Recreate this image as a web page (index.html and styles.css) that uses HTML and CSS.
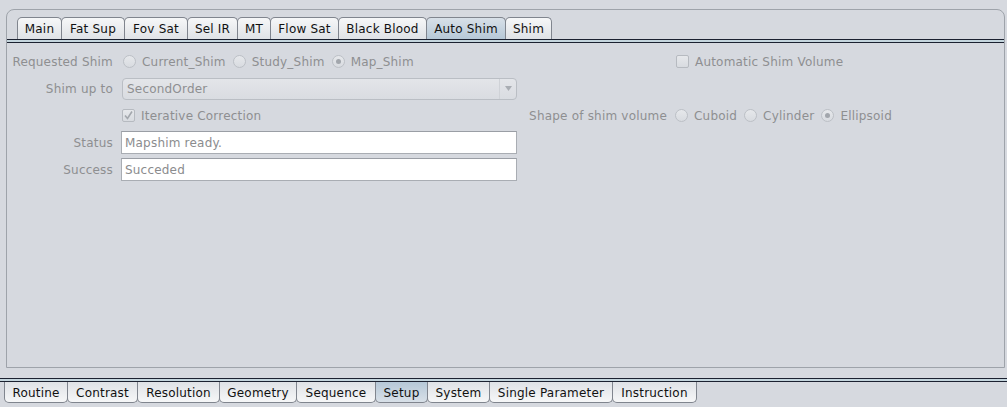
FILE: index.html
```html
<!DOCTYPE html>
<html>
<head>
<meta charset="utf-8">
<link rel="stylesheet" href="styles.css">
</head>
<body>
<div class="panel">
  <div class="tabs top-tabs">
    <div class="tab w-main">Main</div>
    <div class="tab w-fatsup">Fat Sup</div>
    <div class="tab w-fovsat">Fov Sat</div>
    <div class="tab w-selir">Sel IR</div>
    <div class="tab w-mt">MT</div>
    <div class="tab w-flowsat">Flow Sat</div>
    <div class="tab w-black">Black Blood</div>
    <div class="tab w-auto selected">Auto Shim</div>
    <div class="tab w-shim">Shim</div>
  </div>
  <div class="sep"></div>
  <div class="form">
    <div class="label">Requested Shim</div>
    <div class="group radios">
      <span class="radio"></span><span class="opt">Current_Shim</span>
      <span class="radio"></span><span class="opt">Study_Shim</span>
      <span class="radio on"></span><span class="opt">Map_Shim</span>
    </div>
    <div></div>
    <div class="group check-right">
      <span class="check"></span><span class="opt">Automatic Shim Volume</span>
    </div>

    <div class="label">Shim up to</div>
    <div class="combo">
      <span class="combo-text">SecondOrder</span>
      <span class="combo-btn"><svg width="7" height="5" viewBox="0 0 7 5"><path d="M0 0 H7 L3.5 5 Z" fill="#a9adb3"/></svg></span>
    </div>
    <div></div>
    <div></div>

    <div></div>
    <div class="group check-left">
      <span class="check"><svg width="11" height="11" viewBox="0 0 11 11"><path d="M2 5.5 L4.5 8.5 L9 1.5" fill="none" stroke="#a3a7ad" stroke-width="1.6"/></svg></span><span class="opt">Iterative Correction</span>
    </div>
    <div class="label">Shape of shim volume</div>
    <div class="group radios-right">
      <span class="radio"></span><span class="opt">Cuboid</span>
      <span class="radio"></span><span class="opt">Cylinder</span>
      <span class="radio on"></span><span class="opt">Ellipsoid</span>
    </div>

    <div class="label">Status</div>
    <div class="field">Mapshim ready.</div>
    <div></div>
    <div></div>

    <div class="label">Success</div>
    <div class="field">Succeded</div>
    <div></div>
    <div></div>
  </div>
</div>
<div class="sep full"></div>
<div class="tabs bottom-tabs">
  <div class="tab b-routine">Routine</div>
  <div class="tab b-contrast">Contrast</div>
  <div class="tab b-resolution">Resolution</div>
  <div class="tab b-geometry">Geometry</div>
  <div class="tab b-sequence">Sequence</div>
  <div class="tab b-setup selected">Setup</div>
  <div class="tab b-system">System</div>
  <div class="tab b-single">Single Parameter</div>
  <div class="tab b-instruction">Instruction</div>
</div>
</body>
</html>
```
FILE: styles.css
```css
html, body {
  margin: 0;
  padding: 0;
}
body {
  width: 1007px;
  height: 407px;
  overflow: hidden;
  background: #d6d9df;
  font-family: "DejaVu Sans", sans-serif;
  font-size: 12px;
  letter-spacing: 0.2px;
  color: #000;
}
.panel {
  box-sizing: border-box;
  margin: 9px 0 10px 6px;
  width: 999px;
  height: 359px;
  border: 1px solid #9ea3aa;
  border-radius: 8px 8px 0 0;
}
.tabs {
  display: flex;
}
.top-tabs {
  padding: 7px 0 0 10px;
  height: 22px;
}
.tab {
  box-sizing: border-box;
  border: 1px solid #80858e;
  margin-right: -1px;
  display: flex;
  align-items: center;
  justify-content: center;
  white-space: nowrap;
  color: #111;
  flex: none;
}
.top-tabs .tab {
  height: 22px;
  border-bottom: none;
  border-radius: 5px 5px 0 0;
  padding-top: 1px;
  background: linear-gradient(#f6f7f8, #dfe2e6);
}
.top-tabs .tab.selected {
  background: linear-gradient(#d8e0e8, #b6c8d7);
}
.w-main { width: 45px; }
.w-fatsup { width: 64px; }
.w-fovsat { width: 64px; }
.w-selir { width: 51px; }
.w-mt { width: 34px; }
.w-flowsat { width: 69px; }
.w-black { width: 89px; }
.w-auto { width: 80px; }
.w-shim { width: 47px; }

.b-routine { width: 64px; }
.b-contrast { width: 71px; }
.b-resolution { width: 83px; }
.b-geometry { width: 78px; }
.b-sequence { width: 80px; }
.b-setup { width: 53px; }
.b-system { width: 63px; }
.b-single { width: 124px; }
.b-instruction { width: 85px; }

.sep {
  height: 2px;
  border-top: 1px solid #1b2130;
  border-bottom: 1px solid #1b2130;
  background: #c4d5dd;
}
.sep.full {
  width: 1007px;
}
.bottom-tabs {
  padding-left: 4px;
  height: 21px;
}
.bottom-tabs .tab {
  height: 21px;
  border-top: none;
  border-radius: 0 0 5px 5px;
  padding-top: 1px;
  background: linear-gradient(#dfe2e6, #f6f7f8);
}
.bottom-tabs .tab.selected {
  background: linear-gradient(#b6c8d7, #d8e0e8);
}
.form {
  display: grid;
  grid-template-columns: 106px 396px 142px 1fr;
  column-gap: 8px;
  row-gap: 4px;
  grid-auto-rows: 23px;
  padding-top: 7px;
  color: #8e8f91;
}
.label {
  display: flex;
  align-items: center;
  justify-content: flex-end;
  white-space: nowrap;
}
.group {
  display: flex;
  align-items: center;
  white-space: nowrap;
}
.radios {
  padding-left: 2px;
}
.radios-right {
  padding-left: 0;
}
.check-left {
  padding-left: 1px;
}
.check-right {
  padding-left: 1px;
}
.radio {
  box-sizing: border-box;
  width: 13px;
  height: 13px;
  border-radius: 50%;
  border: 1px solid #bcc0c6;
  background: linear-gradient(#e6e8eb, #d8dbe0);
  display: inline-flex;
  align-items: center;
  justify-content: center;
  margin-right: 6px;
}
.radio.on::after {
  content: "";
  width: 5px;
  height: 5px;
  border-radius: 50%;
  background: #a2a6ac;
}
.opt {
  margin-right: 7px;
}
.check {
  box-sizing: border-box;
  width: 13px;
  height: 13px;
  border-radius: 2px;
  border: 1px solid #b6bac0;
  background: linear-gradient(#e6e8eb, #d8dbe0);
  display: inline-flex;
  align-items: center;
  justify-content: center;
  margin-right: 6px;
}
.combo {
  box-sizing: border-box;
  margin-left: 1px;
  width: 395px;
  height: 22px;
  align-self: center;
  border: 1px solid #babec4;
  border-radius: 4px;
  background: linear-gradient(#e3e5e9, #d9dce1);
  display: flex;
  align-items: center;
}
.combo-text {
  flex: 1;
  padding-left: 4px;
}
.combo-btn {
  width: 16px;
  height: 100%;
  display: flex;
  align-items: center;
  justify-content: center;
  border-left: 1px solid #cfd2d7;
}
.field {
  box-sizing: border-box;
  height: 23px;
  background: #fff;
  border: 1px solid #a9adb3;
  border-top-color: #9a9ea5;
  padding-left: 3px;
  display: flex;
  align-items: center;
  color: #8b8c8e;
}
```
